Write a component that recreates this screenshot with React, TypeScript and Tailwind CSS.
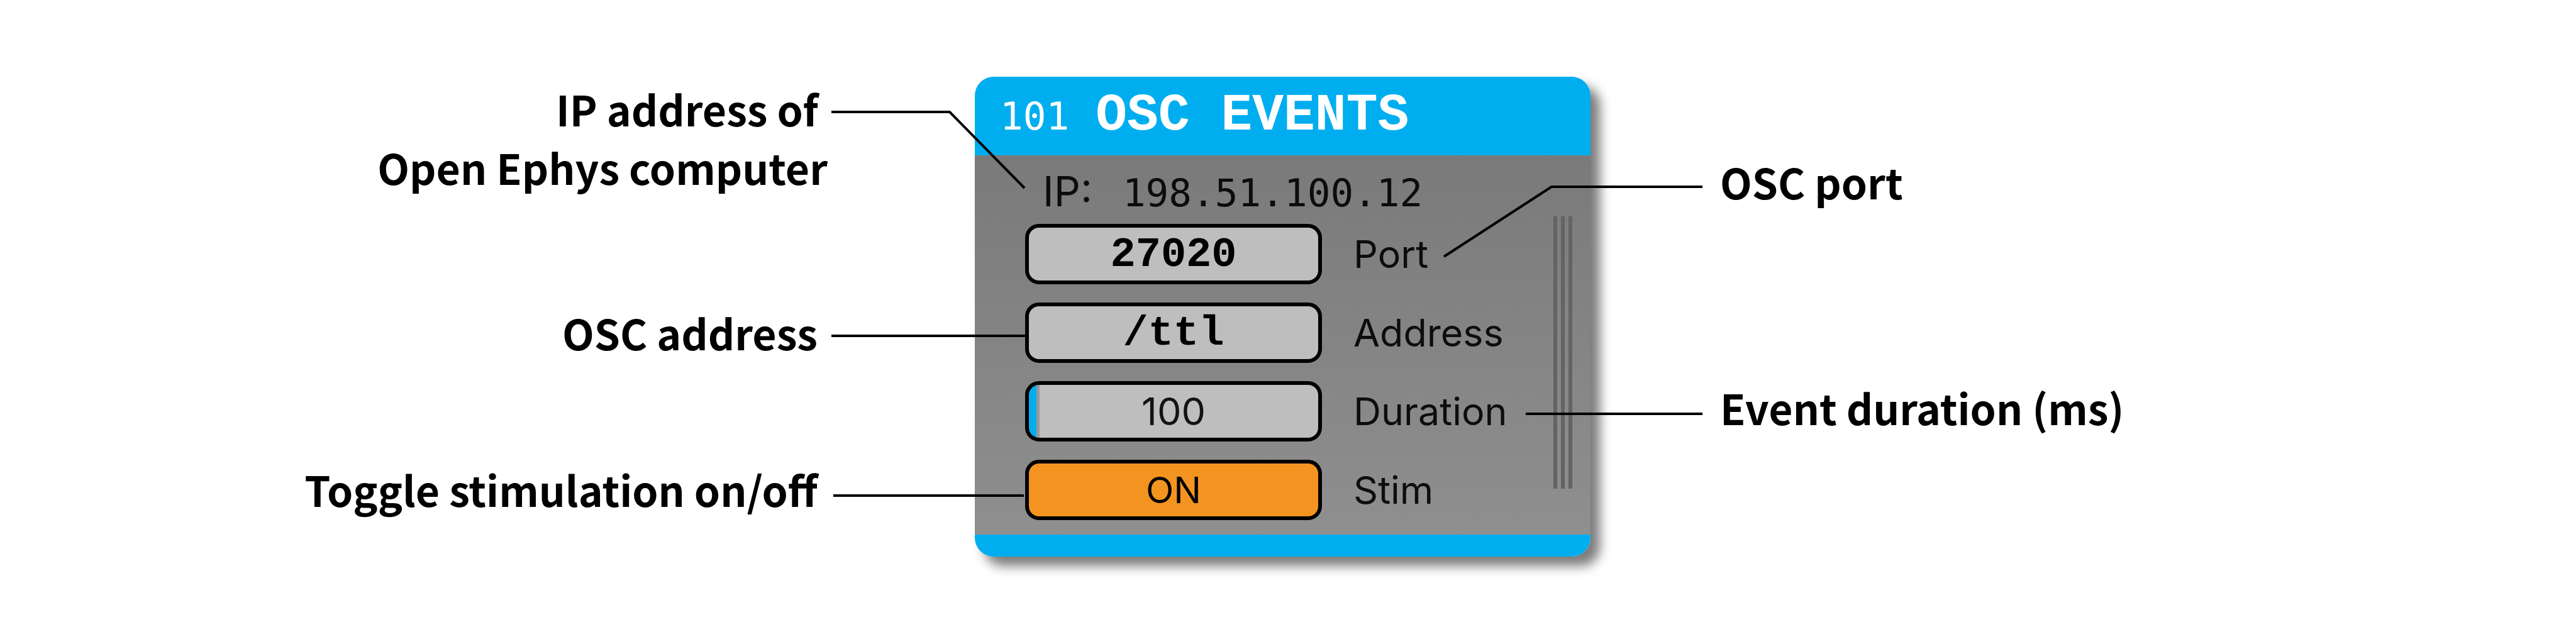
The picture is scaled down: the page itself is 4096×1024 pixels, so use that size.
import type { ReactNode } from "react";

const FIELD =
  "h-24 w-[472px] rounded-[22px] border-[6px] border-black text-center text-black outline-none";
const VALUE_BOLD = "bg-[#bebebe] pt-[2px] font-['Liberation_Mono',monospace] text-[67px] font-bold";
const LABEL = "text-[61px] leading-[96px] text-black/90";

function Row({ id, label, children }: { id: string; label: string; children: ReactNode }) {
  return (
    <div className="flex items-center gap-[50px]">
      {children}
      <label htmlFor={id} className={LABEL}>
        {label}
      </label>
    </div>
  );
}

function Leaders() {
  return (
    <svg
      className="pointer-events-none absolute inset-0 h-full w-full overflow-visible"
      fill="none"
      stroke="#000"
      strokeWidth="4"
      aria-hidden="true"
    >
      <path d="M-228 56H-40L79 177" />
      <path d="M-228 412H82" />
      <path d="M-225 666H78" />
      <path d="M746 286L917 175H1157" />
      <path d="M876 536H1157" />
    </svg>
  );
}

function EventsPanel() {
  return (
    <section className="relative w-[979px] shrink-0 rounded-[30px] font-normal shadow-[15px_15px_18px_rgba(0,0,0,0.52)]">
      <div className="overflow-hidden rounded-[30px] font-['Inter',sans-serif]">
        <header className="flex items-baseline gap-[42px] bg-[#00aeef] pl-10 leading-[125px] text-white">
          <span className="font-['DejaVu_Sans_Mono',monospace] text-[61px] leading-none">101</span>
          <h1 className="font-['Liberation_Mono',monospace] text-[83px] font-bold">OSC EVENTS</h1>
        </header>
        <div className="flex justify-between bg-linear-to-b from-[#7a7a7a] to-[#8f8f8f] pr-[29px] pb-[23px] pl-20">
          <div className="flex flex-col gap-[29px]">
            <div className="flex h-20 items-baseline gap-12 pt-[17px] pl-7 leading-[80px] text-black/90">
              <span className="text-[66px]">IP:</span>
              <span className="font-['DejaVu_Sans_Mono',monospace] text-[61px]">198.51.100.12</span>
            </div>
            <Row id="port" label="Port">
              <input id="port" type="text" defaultValue="27020" className={`${FIELD} ${VALUE_BOLD}`} />
            </Row>
            <Row id="address" label="Address">
              <input id="address" type="text" defaultValue="/ttl" className={`${FIELD} ${VALUE_BOLD}`} />
            </Row>
            <Row id="duration" label="Duration">
              <div className="relative flex">
                <input
                  id="duration"
                  type="range"
                  min={0}
                  max={5000}
                  defaultValue={100}
                  className={`${FIELD} appearance-none bg-[linear-gradient(to_right,#00aeef_12px,#999_12px,#999_17px,#bebebe_17px)] [&::-webkit-slider-thumb]:appearance-none [&::-webkit-slider-thumb]:opacity-0`}
                />
                <output
                  htmlFor="duration"
                  className="pointer-events-none absolute inset-0 text-center text-[61px] leading-[96px] text-black/90"
                >
                  100
                </output>
              </div>
            </Row>
            <Row id="stim" label="Stim">
              <button id="stim" type="button" aria-pressed="true" className={`${FIELD} bg-[#f39420] text-[58px] leading-[84px]`}>
                ON
              </button>
            </Row>
          </div>
          <div className="mt-[97px] flex h-[433px] gap-[6px]">
            <div className="w-[6px] bg-[#636363]" />
            <div className="w-[6px] bg-[#636363]" />
            <div className="w-[6px] bg-[#636363]" />
          </div>
        </div>
        <footer className="h-[35px] bg-[#00aeef]" />
      </div>
      <Leaders />
    </section>
  );
}

export default function App() {
  return (
    <main className="flex min-h-screen items-start bg-white pt-[122px] pr-[17px] font-['Noto_Sans_CJK_SC',sans-serif] text-[66px] leading-[93px] font-semibold text-black">
      <div className="flex flex-1 basis-0 flex-col pt-1 text-right whitespace-pre">
        <p className="pr-[234px]">{"IP address of \nOpen Ephys computer"}</p>
        <p className="mt-[170px] pr-[250px]">OSC address</p>
        <p className="mt-[156px] pr-[250px]">Toggle stimulation on/off</p>
      </div>
      <EventsPanel />
      <div className="flex flex-1 basis-0 flex-col pt-[120px] whitespace-nowrap">
        <p className="pl-[206px]">OSC port</p>
        <p className="mt-[266px] pl-[206px]">Event duration (ms)</p>
      </div>
    </main>
  );
}
